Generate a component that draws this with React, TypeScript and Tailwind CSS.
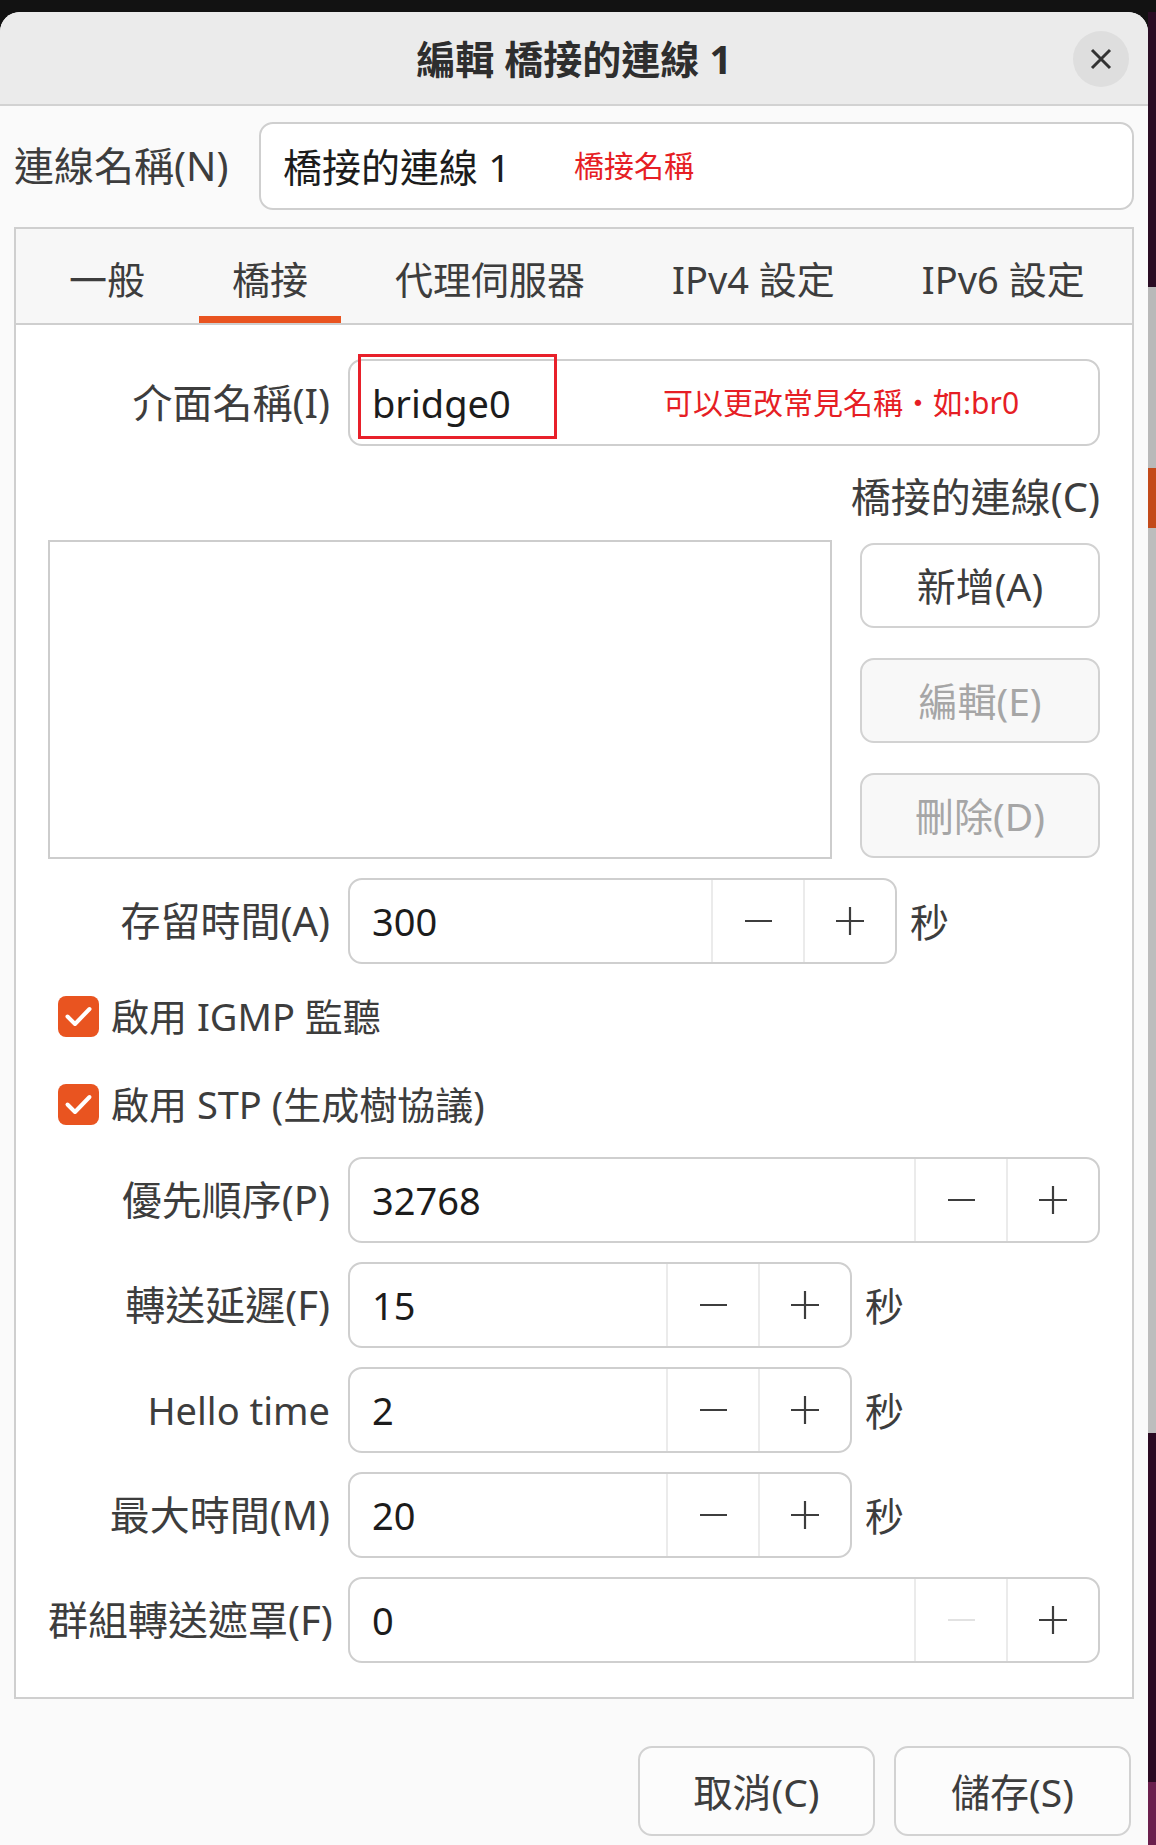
import React from "react";

const tabs = ["一般", "橋接", "代理伺服器", "IPv4 設定", "IPv6 設定"];

function MinusIcon({ disabled }: { disabled?: boolean }) {
  return (
    <span
      className={`block w-[27px] h-[2px] ${disabled ? "bg-[#e2e2e2]" : "bg-[#3d3d3d]"}`}
    />
  );
}

function PlusIcon() {
  return (
    <svg width="30" height="30" viewBox="0 0 30 30">
      <path d="M15 1v28M1 15h28" stroke="#3d3d3d" strokeWidth="2.2" fill="none" />
    </svg>
  );
}

function SpinBox({
  value,
  width,
  minusDisabled,
}: {
  value: string;
  width: string;
  minusDisabled?: boolean;
}) {
  return (
    <div
      className={`flex h-[86px] ${width} rounded-[14px] border-2 border-[#cfcfcf] bg-white overflow-hidden`}
    >
      <div className="flex-1 flex items-center pl-[22px] text-[38px] leading-none text-[#1c1c1c]">
        {value}
      </div>
      <div className="w-[92px] border-l-2 border-[#ebebeb] flex items-center justify-center">
        <MinusIcon disabled={minusDisabled} />
      </div>
      <div className="w-[92px] border-l-2 border-[#ebebeb] flex items-center justify-center">
        <PlusIcon />
      </div>
    </div>
  );
}

function FieldRow({
  label,
  children,
  className = "",
  latin,
}: {
  label: string;
  children: React.ReactNode;
  className?: string;
  latin?: boolean;
}) {
  return (
    <div className={`flex items-center ${className}`}>
      <div
        className={`w-[282px] text-right leading-none text-[#3d3d3d] whitespace-nowrap ${
          latin ? "text-[38px]" : "text-[40px]"
        }`}
      >
        {label}
      </div>
      <div className="ml-[18px] flex-1 flex items-center">{children}</div>
    </div>
  );
}

function Unit() {
  return <span className="ml-[13px] text-[39px] leading-none text-[#3d3d3d]">秒</span>;
}

function CheckRow({ label, className = "" }: { label: string; className?: string }) {
  return (
    <div className={`flex items-center h-[44px] pl-[10px] ${className}`}>
      <div className="w-[41px] h-[41px] rounded-[8px] bg-[#e95420] flex items-center justify-center">
        <svg width="41" height="41" viewBox="0 0 41 41">
          <path
            d="M9.5 20.5l7.5 7.5 14.5-15"
            stroke="#fff"
            strokeWidth="4"
            fill="none"
            strokeLinecap="round"
            strokeLinejoin="round"
          />
        </svg>
      </div>
      <span className="ml-[12px] text-[38px] leading-none text-[#3d3d3d] whitespace-nowrap">
        {label}
      </span>
    </div>
  );
}

function SideButton({ label, disabled }: { label: string; disabled?: boolean }) {
  return (
    <div
      className={`h-[85px] rounded-[14px] border-2 border-[#d2d2d2] flex items-center justify-center text-[39px] leading-none ${
        disabled ? "bg-[#f8f8f8] text-[#a6a6a6]" : "bg-white text-[#3d3d3d]"
      }`}
    >
      {label}
    </div>
  );
}

export default function App() {
  return (
    <div
      lang="zh-TW"
      className="w-[1156px] h-[1845px] bg-[#121212] flex overflow-hidden font-['Noto_Sans','Noto_Sans_CJK_TC',sans-serif]"
    >
      {/* dialog */}
      <div className="w-[1148px] h-[1833px] mt-[12px] rounded-t-[20px] bg-[#fafafa] flex flex-col overflow-hidden">
        {/* title bar */}
        <div className="h-[94px] shrink-0 bg-[#ebebeb] border-b-2 border-[#d2d2d2] flex items-center relative">
          <div className="flex-1 text-center text-[39px] font-bold leading-none text-[#2e2e2e]">
            編輯 橋接的連線 1
          </div>
          <div className="absolute right-[19px] top-[19px] w-[56px] h-[56px] rounded-full bg-[#dedede] flex items-center justify-center">
            <svg width="22" height="22" viewBox="0 0 22 22">
              <path d="M2 2l18 18M20 2L2 20" stroke="#333" strokeWidth="3" fill="none" />
            </svg>
          </div>
        </div>

        {/* connection name */}
        <div className="mt-[16px] px-[14px] flex items-center">
          <div className="w-[245px] text-[40px] leading-none text-[#3d3d3d] whitespace-nowrap">
            連線名稱(N)
          </div>
          <div className="flex-1 h-[88px] rounded-[14px] border-2 border-[#cfcfcf] bg-white flex items-center pl-[22px]">
            <span className="w-[291px] text-[39px] leading-none text-[#1c1c1c] whitespace-nowrap">
              橋接的連線 1
            </span>
            <span className="text-[30px] leading-none text-[#e61e25]">橋接名稱</span>
          </div>
        </div>

        {/* notebook */}
        <div className="mt-[17px] mx-[14px] border-2 border-[#cfcfcf] flex flex-col">
          <div className="h-[96px] bg-[#f7f7f7] border-b-2 border-[#cfcfcf] flex pl-[20px] gap-[21px]">
            {tabs.map((t) => (
              <div key={t} className="flex flex-col px-[33px] relative">
                <div className="flex-1 flex items-center pt-[12px] text-[38px] leading-none text-[#3d3d3d] whitespace-nowrap">
                  {t}
                </div>
                <div className={`h-[7px] -mx-[33px] ${t === "橋接" ? "bg-[#e95420]" : ""}`} />
              </div>
            ))}
          </div>

          <div className="bg-white pt-[34px] pb-[34px] px-[32px] flex flex-col">
            {/* interface name */}
            <FieldRow label="介面名稱(I)">
              <div className="relative flex-1 h-[87px] rounded-[14px] border-2 border-[#cfcfcf] bg-white flex items-center pl-[22px]">
                <span className="w-[291px] text-[38px] leading-none text-[#1c1c1c]">bridge0</span>
                <span className="text-[30px] leading-none text-[#e61e25] whitespace-nowrap">
                  可以更改常見名稱・如:br0
                </span>
                <div className="absolute left-[8px] top-[-7px] w-[199px] h-[85px] border-[3px] border-[#e8202a]" />
              </div>
            </FieldRow>

            <div className="mt-[26px] h-[50px] flex items-center justify-end text-[40px] leading-none text-[#3d3d3d]">
              橋接的連線(C)
            </div>

            <div className="mt-[18px] flex h-[319px]">
              <div className="w-[784px] h-full border-2 border-[#cdcdcd] bg-white" />
              <div className="ml-[28px] flex-1 pt-[3px] flex flex-col gap-[30px]">
                <SideButton label="新增(A)" />
                <SideButton label="編輯(E)" disabled />
                <SideButton label="刪除(D)" disabled />
              </div>
            </div>

            <FieldRow label="存留時間(A)" className="mt-[19px]">
              <SpinBox value="300" width="w-[549px]" />
              <Unit />
            </FieldRow>

            <CheckRow label="啟用 IGMP 監聽" className="mt-[30px]" />
            <CheckRow label="啟用 STP (生成樹協議)" className="mt-[44px]" />

            <FieldRow label="優先順序(P)" className="mt-[31px]">
              <SpinBox value="32768" width="flex-1" />
            </FieldRow>
            <FieldRow label="轉送延遲(F)" className="mt-[19px]">
              <SpinBox value="15" width="w-[504px]" />
              <Unit />
            </FieldRow>
            <FieldRow label="Hello time" className="mt-[19px]" latin>
              <SpinBox value="2" width="w-[504px]" />
              <Unit />
            </FieldRow>
            <FieldRow label="最大時間(M)" className="mt-[19px]">
              <SpinBox value="20" width="w-[504px]" />
              <Unit />
            </FieldRow>
            <FieldRow label="群組轉送遮罩(F)" className="mt-[19px]">
              <SpinBox value="0" width="flex-1" minusDisabled />
            </FieldRow>
          </div>
        </div>

        {/* footer buttons */}
        <div className="mt-[47px] pr-[17px] flex justify-end gap-[19px]">
          <div className="w-[237px] h-[90px] rounded-[14px] border-2 border-[#d2d2d2] bg-[#fcfcfc] flex items-center justify-center text-[39px] leading-none text-[#3d3d3d]">
            取消(C)
          </div>
          <div className="w-[237px] h-[90px] rounded-[14px] border-2 border-[#d2d2d2] bg-[#fcfcfc] flex items-center justify-center text-[39px] leading-none text-[#3d3d3d]">
            儲存(S)
          </div>
        </div>
      </div>

      {/* desktop edge behind dialog */}
      <div className="w-[8px] flex flex-col">
        <div className="h-[12px] bg-[#121212]" />
        <div className="h-[275px] bg-[#2a0d24]" />
        <div className="h-[181px] bg-[#b9b9b9]" />
        <div className="h-[60px] bg-[#c34a1a]" />
        <div className="h-[905px] bg-[#bdbdbd]" />
        <div className="h-[349px] bg-[#2a0a22]" />
        <div className="flex-1 bg-[#6b1f4d]" />
      </div>
    </div>
  );
}
